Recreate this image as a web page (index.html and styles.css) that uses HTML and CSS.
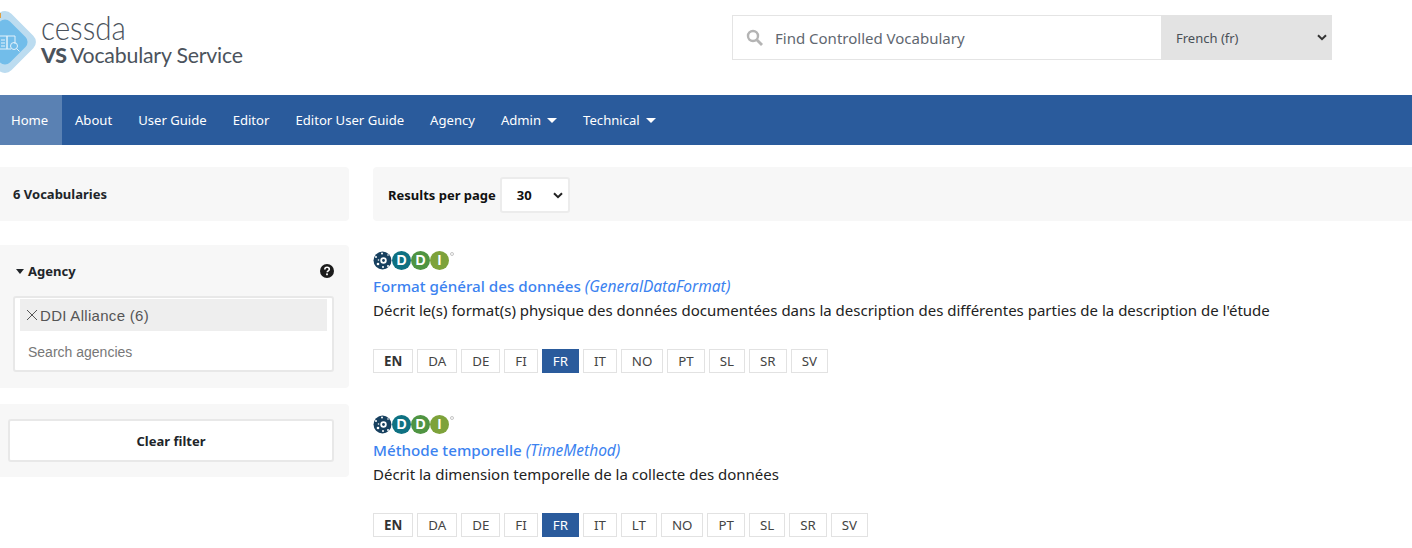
FILE: index.html
```html
<!DOCTYPE html>
<html lang="en">
<head>
  <meta charset="UTF-8">
  <title>CESSDA Vocabulary Service</title>
  <link rel="stylesheet" href="styles.css">
</head>
<body>

  <div class="header">
    <div class="logo">
      <svg class="logo-mark" width="36" height="62" viewBox="0 0 36 62">
        <rect x="-19.500" y="6.500" width="49" height="49" rx="9" transform="rotate(45 5 31)" fill="#bcdcf0"/>
        <rect x="-13" y="13" width="36" height="36" rx="7" transform="rotate(45 5 31)" fill="#72bdea"/>
        <path d="M0 25h7v13H0M7 25h8v8M7 25v13h4" fill="none" stroke="#e3f2fb" stroke-width="1"/>
        <path d="M1 29h4M1 32h4M1 35h4" stroke="#e3f2fb" stroke-width="1"/>
        <circle cx="14" cy="35" r="3.500" fill="none" stroke="#e3f2fb" stroke-width="1"/>
        <path d="M16.500 37.500l3 3" stroke="#e3f2fb" stroke-width="1"/>
        <rect x="0" y="2" width="1" height="5" fill="#e0a040"/>
      </svg>
      <div class="logo-text">
        <div class="logo-name">cessda</div>
        <div class="logo-service"><b>VS</b>Vocabulary Service</div>
      </div>
    </div>
    <div class="search-box">
      <div class="search-input">
        <svg width="17" height="17" viewBox="0 0 17 17">
          <circle cx="7" cy="7" r="5" fill="none" stroke="#b4b4b4" stroke-width="2.400"/>
          <path d="M11 11l5 5" stroke="#b4b4b4" stroke-width="2.800"/>
        </svg>
        <span>Find Controlled Vocabulary</span>
      </div>
      <div class="lang-select">
        <span>French (fr)</span>
        <svg width="10" height="7" viewBox="0 0 10 7"><path d="M1 1.200l4 4 4-4" fill="none" stroke="#333" stroke-width="2"/></svg>
      </div>
    </div>
  </div>

  <div class="nav">
    <a class="nav-item active">Home</a>
    <a class="nav-item">About</a>
    <a class="nav-item">User Guide</a>
    <a class="nav-item">Editor</a>
    <a class="nav-item">Editor User Guide</a>
    <a class="nav-item">Agency</a>
    <a class="nav-item">Admin <i class="caret"></i></a>
    <a class="nav-item">Technical <i class="caret"></i></a>
  </div>

  <div class="content">
    <div class="sidebar">
      <div class="panel count-panel">6 Vocabularies</div>

      <div class="panel agency-panel">
        <div class="agency-title">
          <span class="agency-label"><i class="caret dark"></i>Agency</span>
          <svg width="14" height="14" viewBox="0 0 14 14">
            <circle cx="7" cy="7" r="7" fill="#1c1c1c"/>
            <path d="M4.800 5.400c0-1.400 1-2.200 2.300-2.200s2.200.8 2.200 2c0 1.700-2.100 1.600-2.100 3" fill="none" stroke="#fff" stroke-width="1.600"/>
            <rect x="6.100" y="9.400" width="1.800" height="1.800" fill="#fff"/>
          </svg>
        </div>
        <div class="agency-select">
          <div class="agency-tag">
            <svg width="12" height="12" viewBox="0 0 12 12"><path d="M1 1l10 10M11 1L1 11" stroke="#555" stroke-width="1"/></svg>
            <span>DDI Alliance (6)</span>
          </div>
          <div class="agency-search">Search agencies</div>
        </div>
      </div>

      <div class="panel clear-panel">
        <div class="clear-btn">Clear filter</div>
      </div>
    </div>

    <div class="main">
      <div class="results-bar">
        <b>Results per page</b>
        <div class="page-select">
          <span>30</span>
          <svg width="10" height="7" viewBox="0 0 10 7"><path d="M1 1.200l4 4 4-4" fill="none" stroke="#222" stroke-width="2"/></svg>
        </div>
      </div>

      <div class="vocab">
        <div class="ddi-logo">
          <svg class="ddi-gear" width="19" height="19" viewBox="0 0 19 19">
            <circle cx="9.500" cy="9.500" r="9" fill="#17405f"/>
            <circle cx="10.500" cy="9.500" r="3.200" fill="#fff"/>
            <circle cx="10.500" cy="9.500" r="1.400" fill="#17405f"/>
            <circle cx="3" cy="6" r="1" fill="#fff"/>
            <circle cx="5" cy="13" r="1.300" fill="#fff"/>
            <circle cx="9" cy="2.500" r="1" fill="#fff"/>
            <circle cx="15" cy="15" r="1" fill="#fff"/>
            <circle cx="10" cy="16" r="1" fill="#fff"/>
            <circle cx="5.500" cy="9" r=".8" fill="#fff"/>
            <circle cx="15" cy="4" r=".8" fill="#fff"/>
          </svg>
          <span class="ddi-letter teal">D</span>
          <span class="ddi-letter green">D</span>
          <span class="ddi-letter olive">I</span>
          <span class="ddi-reg"></span>
        </div>
        <div class="vocab-title">Format général des données <em>(GeneralDataFormat)</em></div>
        <div class="vocab-desc">Décrit le(s) format(s) physique des données documentées dans la description des différentes parties de la description de l'étude</div>
        <div class="langs">
          <span class="lang bold">EN</span>
          <span class="lang">DA</span>
          <span class="lang">DE</span>
          <span class="lang">FI</span>
          <span class="lang current">FR</span>
          <span class="lang">IT</span>
          <span class="lang">NO</span>
          <span class="lang">PT</span>
          <span class="lang">SL</span>
          <span class="lang">SR</span>
          <span class="lang">SV</span>
        </div>
      </div>

      <div class="vocab">
        <div class="ddi-logo">
          <svg class="ddi-gear" width="19" height="19" viewBox="0 0 19 19">
            <circle cx="9.500" cy="9.500" r="9" fill="#17405f"/>
            <circle cx="10.500" cy="9.500" r="3.200" fill="#fff"/>
            <circle cx="10.500" cy="9.500" r="1.400" fill="#17405f"/>
            <circle cx="3" cy="6" r="1" fill="#fff"/>
            <circle cx="5" cy="13" r="1.300" fill="#fff"/>
            <circle cx="9" cy="2.500" r="1" fill="#fff"/>
            <circle cx="15" cy="15" r="1" fill="#fff"/>
            <circle cx="10" cy="16" r="1" fill="#fff"/>
            <circle cx="5.500" cy="9" r=".8" fill="#fff"/>
            <circle cx="15" cy="4" r=".8" fill="#fff"/>
          </svg>
          <span class="ddi-letter teal">D</span>
          <span class="ddi-letter green">D</span>
          <span class="ddi-letter olive">I</span>
          <span class="ddi-reg"></span>
        </div>
        <div class="vocab-title">Méthode temporelle <em>(TimeMethod)</em></div>
        <div class="vocab-desc">Décrit la dimension temporelle de la collecte des données</div>
        <div class="langs">
          <span class="lang bold">EN</span>
          <span class="lang">DA</span>
          <span class="lang">DE</span>
          <span class="lang">FI</span>
          <span class="lang current">FR</span>
          <span class="lang">IT</span>
          <span class="lang">LT</span>
          <span class="lang">NO</span>
          <span class="lang">PT</span>
          <span class="lang">SL</span>
          <span class="lang">SR</span>
          <span class="lang">SV</span>
        </div>
      </div>
    </div>
  </div>

</body>
</html>
```

FILE: styles.css
```css
body {
  font-family: "Noto Sans", sans-serif;
  font-size: 14px;
  margin: 0;
  padding: 0;
  background-color: white;
  color: #212529;
}
.header {
  height: 95px;
  display: flex;
  justify-content: space-between;
  align-items: flex-start;
  padding-right: 80px;
}
.logo {
  display: flex;
  align-items: flex-start;
  padding-top: 11px;
  gap: 5px;
}
.logo-text {
  color: #4b535c;
  line-height: 1;
}
.logo-name {
  font-family: "Lato", sans-serif;
  font-weight: 300;
  font-size: 34px;
  height: 31px;
  line-height: 31px;
  transform: scaleX(0.87);
  transform-origin: left;
}
.logo-service {
  font-family: "Lato", sans-serif;
  font-size: 21.300px;
  letter-spacing: -0.2px;
  margin-top: 3px;
}
.logo-service b {
  font-weight: 900;
  margin-right: 3px;
}
.search-box {
  display: flex;
  width: 600px;
  height: 45px;
  margin-top: 15px;
}
.search-input {
  flex: 1;
  display: flex;
  align-items: center;
  gap: 12px;
  padding-left: 13px;
  border: 1px solid #e4e4e4;
  border-right: none;
  font-size: 15px;
  color: #5f6770;
}
.lang-select {
  width: 171px;
  background-color: #e3e3e3;
  display: flex;
  align-items: center;
  justify-content: space-between;
  padding: 0 5px 0 15px;
  box-sizing: border-box;
  font-size: 13px;
  color: #495057;
}
.nav {
  height: 50px;
  background-color: #2a5b9c;
  display: flex;
}
.nav-item {
  color: white;
  font-size: 13.100px;
  padding: 0 13px;
  display: flex;
  align-items: center;
  gap: 6px;
  white-space: nowrap;
}
.nav-item.active {
  background-color: #5a81b3;
  padding: 0 13px 0 11px;
  margin-right: 0;
  width: 51px;
  box-sizing: content-box;
  padding-right: 0;
}
.caret {
  display: inline-block;
  width: 0;
  height: 0;
  border-left: 5px solid transparent;
  border-right: 5px solid transparent;
  border-top: 5px solid white;
}
.caret.dark {
  margin: 0 4px 2px 0;
  border-left-width: 4px;
  border-right-width: 4px;
  border-top: 5px solid #212529;
}
.content {
  display: flex;
  gap: 24px;
  padding-top: 22px;
}
.sidebar {
  width: 349px;
  flex-shrink: 0;
}
.panel {
  background-color: #f7f7f7;
  border-radius: 0 4px 4px 0;
}
.count-panel {
  height: 54px;
  line-height: 54px;
  padding-left: 13px;
  font-size: 13px;
  font-weight: 700;
  margin-bottom: 24px;
}
.agency-panel {
  height: 143px;
  padding: 17px 15px 0 13px;
  box-sizing: border-box;
  margin-bottom: 16px;
}
.agency-title {
  display: flex;
  justify-content: space-between;
  align-items: center;
  padding: 0 0 0 3px;
  font-size: 13px;
  font-weight: 700;
  height: 18px;
  margin-bottom: 16px;
}
.agency-select {
  height: 76px;
  background-color: white;
  border: 2px solid #e8e8e8;
  border-radius: 3px;
  padding: 1px 5px;
  box-sizing: border-box;
  font-family: "Liberation Sans", sans-serif;
}
.agency-tag {
  height: 32px;
  background-color: #eee;
  display: flex;
  align-items: center;
  gap: 2px;
  padding-left: 6px;
  font-size: 15px;
  letter-spacing: 0.3px;
  color: #555;
}
.agency-search {
  padding: 13px 0 0 8px;
  font-size: 14px;
  color: #777;
}
.clear-panel {
  height: 73px;
  padding: 15px 15px 0 8px;
  box-sizing: border-box;
}
.clear-btn {
  height: 43px;
  line-height: 41px;
  border: 2px solid #e8e8e8;
  border-radius: 3px;
  box-sizing: border-box;
  background-color: white;
  text-align: center;
  font-size: 13px;
  font-weight: 700;
}
.main {
  flex: 1;
}
.results-bar {
  height: 54px;
  background-color: #f7f7f7;
  border-radius: 4px 0 0 4px;
  display: flex;
  align-items: center;
  gap: 4px;
  padding: 2px 0 0 15px;
  box-sizing: border-box;
  font-size: 13px;
  margin-bottom: 29px;
  color: #111;
}
.page-select {
  width: 70px;
  height: 36px;
  box-sizing: border-box;
  background-color: white;
  border: 2px solid #ececec;
  border-radius: 3px;
  display: flex;
  align-items: center;
  justify-content: space-between;
  padding: 0 5px 0 15px;
  font-weight: 700;
  font-size: 13px;
}
.vocab + .vocab {
  margin-top: 41px;
}
.ddi-logo {
  display: flex;
  height: 20px;
  align-items: center;
  margin-bottom: 2px;
}
.ddi-letter {
  width: 19px;
  height: 19px;
  border-radius: 50%;
  color: white;
  font-family: "Liberation Sans", sans-serif;
  font-weight: 700;
  font-size: 14px;
  line-height: 19px;
  text-align: center;
}
.teal { background-color: #0e7182; }
.green { background-color: #4f9442; }
.olive { background-color: #7da23a; }
.ddi-reg {
  width: 2px;
  height: 2px;
  margin: -13px 0 0 1px;
  border: 1px solid #c4c4c4;
  border-radius: 50%;
}
.vocab-title {
  font-size: 15.200px;
  font-weight: 500;
  color: #3b82f0;
  line-height: 20px;
  margin-top: 6px;
}
.vocab-title em {
  font-weight: 400;
  font-size: 15.500px;
}
.vocab-desc {
  font-size: 15px;
  line-height: 24px;
  margin-top: 2px;
  color: #222;
}
.langs {
  display: flex;
  gap: 4px;
  margin-top: 27px;
}
.lang {
  height: 24px;
  line-height: 22px;
  box-sizing: border-box;
  padding: 0 10px;
  border: 1px solid #e2e2e2;
  font-size: 13.300px;
  color: #444;
}
.lang.bold {
  font-weight: 700;
  color: #333;
}
.lang.current {
  background-color: #2a5b9c;
  border-color: #2a5b9c;
  color: white;
}
```
